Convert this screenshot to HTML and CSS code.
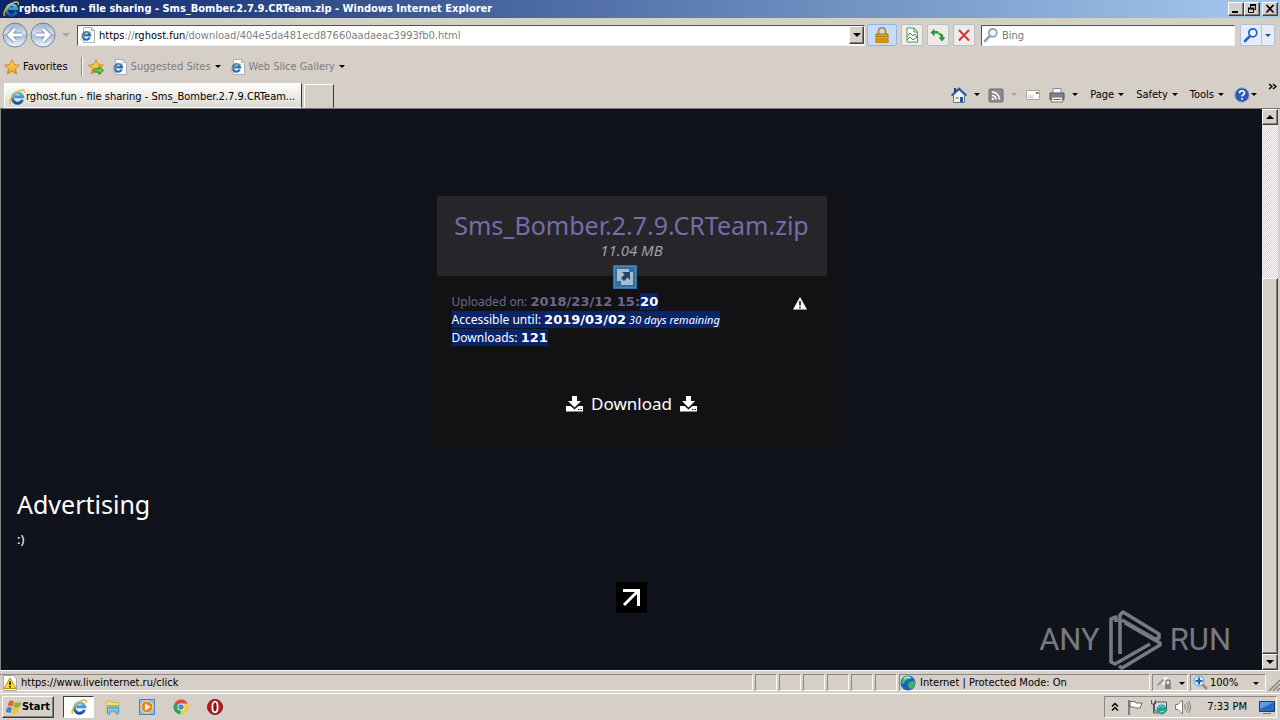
FILE: index.html
```html
<!DOCTYPE html>
<html lang="en">
<head>
<meta charset="utf-8">
<title>rghost.fun - file sharing</title>
<link rel="stylesheet" href="styles.css">
</head>
<body>
<svg class="defs" aria-hidden="true">
  <defs>
    <linearGradient id="blue" x1="0" y1="0" x2="0" y2="1"><stop offset="0" stop-color="#5cc3f5"/><stop offset="1" stop-color="#1450a8"/></linearGradient>
    <linearGradient id="orb" x1="0" y1="0" x2="0" y2="1"><stop offset="0" stop-color="#9db0cc"/><stop offset=".45" stop-color="#d3dfee"/><stop offset=".5" stop-color="#a9bedb"/><stop offset="1" stop-color="#ecf8ff"/></linearGradient>
    <linearGradient id="gold" x1="0" y1="0" x2="0" y2="1"><stop offset="0" stop-color="#ffe27a"/><stop offset="1" stop-color="#f09a10"/></linearGradient>
    <symbol id="ie" viewBox="0 0 16 16">
      <path d="M13.500 10.800A5.200 5.200 0 1 1 13.700 7.800H5.500" fill="none" stroke="url(#blue)" stroke-width="3"/>
      <path d="M2 15C-1 13 3.500 5.500 8.500 2.600 12 .4 16 0 15.200 3.800" fill="none" stroke="#e9b52d" stroke-width="1.400"/>
    </symbol>
    <symbol id="iepage" viewBox="0 0 16 16">
      <path d="M3.500.5h8l3 3v12h-11z" fill="#fff" stroke="#a9aeb8"/>
      <path d="M11.500.5v3h3" fill="none" stroke="#a9aeb8"/>
      <path d="M9.700 10.500A3.700 3.700 0 1 1 10 8.300H4" fill="none" stroke="#1f6fc4" stroke-width="2.200"/>
      <path d="M1.300 13.700C0 11.500 4 6 8 4.800c2-.6 3 0 2.500 1.200" fill="none" stroke="#e0b040"/>
    </symbol>
    <symbol id="star" viewBox="0 0 16 16">
      <path d="M8 .8l2.200 4.800 5.200.6-3.900 3.500 1.100 5.200L8 12.300l-4.600 2.600 1.100-5.200L.6 6.200l5.200-.6z" fill="url(#gold)" stroke="#cf8a1c"/>
    </symbol>
    <symbol id="glass" viewBox="0 0 16 16">
      <path d="M6.500 9.500L2 14" stroke="currentColor" stroke-width="2.600" stroke-linecap="round"/>
      <circle cx="9.800" cy="5.800" r="4" fill="#e9f4ff" stroke="currentColor" stroke-width="1.700"/>
    </symbol>
    <symbol id="dl" viewBox="0 0 17 16">
      <path d="M6 0h5v5h4L8.500 11.500 2 5h4z" fill="#fff"/>
      <path d="M0 10h4.500l4 3.500 4-3.500H17v5.500H0z" fill="#fff"/>
      <path d="M12 13h1.500v1H12zM14.500 13H16v1h-1.500z" fill="#121214"/>
    </symbol>
  </defs>
</svg>

<header class="titlebar">
  <svg class="i16"><use href="#ie"/></svg>
  <h1>rghost.fun - file sharing - Sms_Bomber.2.7.9.CRTeam.zip - Windows Internet Explorer</h1>
  <div class="winbtns">
    <button class="raised" aria-label="Minimize"><svg viewBox="0 0 14 12"><path d="M3 9h6" stroke="#000" stroke-width="2"/></svg></button>
    <button class="raised" aria-label="Restore"><svg viewBox="0 0 14 12"><path d="M5.500 5V1.500h5v5H9" fill="none" stroke="#000"/><path d="M5 2h6M3 5.500h6" stroke="#000" stroke-width="2"/><path d="M3.500 5.500h5v4h-5z" fill="none" stroke="#000"/></svg></button>
    <button class="raised close" aria-label="Close"><svg viewBox="0 0 14 12"><path d="M3.500 2l7 7.500M10.500 2l-7 7.500" stroke="#000" stroke-width="1.700"/></svg></button>
  </div>
</header>

<nav class="navrow">
  <div class="orbs">
    <button aria-label="Back"><svg viewBox="0 0 26 26"><circle cx="13" cy="13" r="12" fill="url(#orb)" stroke="#76839b"/><path d="M20 13H8M13 7l-6 6 6 6" fill="none" stroke="#7f93b5" stroke-width="5"/><path d="M20 13H8M13 7l-6 6 6 6" fill="none" stroke="#fff" stroke-width="3"/></svg></button>
    <button aria-label="Forward"><svg viewBox="0 0 26 26"><circle cx="13" cy="13" r="12" fill="url(#orb)" stroke="#76839b"/><path d="M6 13h12M13 7l6 6-6 6" fill="none" stroke="#7f93b5" stroke-width="5"/><path d="M6 13h12M13 7l6 6-6 6" fill="none" stroke="#fff" stroke-width="3"/></svg></button>
    <svg class="tri pale" viewBox="0 0 8 4"><path d="M0 0h8L4 4z"/></svg>
  </div>
  <div class="address sunken">
    <svg class="i16"><use href="#iepage"/></svg>
    <div class="url" role="textbox" aria-label="Address"><b>https</b>://<b>rghost.fun</b>/download/404e5da481ecd87660aadaeac3993fb0.html</div>
    <button class="raised drop" aria-label="Show addresses"><svg class="tri" viewBox="0 0 8 4"><path d="M0 0h8L4 4z"/></svg></button>
  </div>
  <button class="tool lock" aria-label="Security report"><svg class="i16" viewBox="0 0 16 16"><path d="M4.500 7V4a3.500 3.500 0 0 1 7 0v3" fill="none" stroke="#a88a4a" stroke-width="1.800"/><path d="M2 7h12v9H2z" fill="#e8a81e" stroke="#a9720c"/><path d="M3 9.500h10M3 12h10M3 14h10" stroke="#b87d10"/></svg></button>
  <button class="tool" aria-label="Compatibility view"><svg class="i16" viewBox="0 0 16 16"><path d="M3 1h7l3.500 3.500V15H3z" fill="#fff" stroke="#4b9a50"/><path d="M10 1v4h3M3 10l3-4 3 3 2-2 2 3M3 13l3-3 3 3 4-3" fill="none" stroke="#3d9345"/></svg></button>
  <button class="tool" aria-label="Refresh"><svg class="i16" viewBox="0 0 16 16"><path d="M.5 5.500L4.500 1.500V4h2.500c1.500 0 2 1 2 2.500H4.500v3zM15.500 10.500l-3.500 4-3.500-4h2c0-2-.5-2.500-2-2.500V6c3.500 0 5 1.500 5 4.500z" fill="#2f9637"/></svg></button>
  <button class="tool" aria-label="Stop"><svg class="i16" viewBox="0 0 16 16"><path d="M3 3l10 10.500M13 3L3 13.500" stroke="#d3333a" stroke-width="2"/></svg></button>
  <label class="search sunken"><svg class="i16"><use href="#glass"/></svg><input type="text" placeholder="Bing" aria-label="Search Bing"></label>
  <div class="go">
    <button aria-label="Search"><svg class="i16"><use href="#glass"/></svg></button>
    <button aria-label="Search options"><svg class="tri" viewBox="0 0 8 4"><path d="M0 0h8L4 4z"/></svg></button>
  </div>
</nav>

<div class="favrow">
  <button class="fav"><svg class="i16"><use href="#star"/></svg>Favorites</button>
  <span class="rule"></span>
  <button aria-label="Add to favorites"><svg class="i16" viewBox="0 0 16 16"><use href="#star"/><path d="M6 10h5V7.500l4.500 4-4.500 4V13H6z" fill="#6ed04e" stroke="#258b20"/></svg></button>
  <button class="dim"><svg class="i16"><use href="#iepage"/></svg>Suggested Sites<svg class="tri" viewBox="0 0 8 4"><path d="M0 0h8L4 4z"/></svg></button>
  <button class="dim"><svg class="i16"><use href="#iepage"/></svg>Web Slice Gallery<svg class="tri" viewBox="0 0 8 4"><path d="M0 0h8L4 4z"/></svg></button>
</div>

<div class="tabrow">
  <button class="tab"><svg class="i16"><use href="#ie"/></svg>rghost.fun - file sharing - Sms_Bomber.2.7.9.CRTeam...</button>
  <button class="newtab" aria-label="New tab"></button>
  <div class="commands">
    <button aria-label="Home"><svg class="i16" viewBox="0 0 16 16"><path d="M2.500 8v7.500h11V8L8 3z" fill="#eaf2fb" stroke="#5c7aa5"/><path d="M.5 8.500L8 1.500l7.500 7" fill="none" stroke="#2b579b" stroke-width="1.800"/><path d="M3 1h2v4H3z" fill="#243f78"/><path d="M9 10h3v5H9z" fill="#1d5b9b"/><path d="M4.500 10h3v2h-3z" fill="#d09a36"/></svg><svg class="tri" viewBox="0 0 8 4"><path d="M0 0h8L4 4z"/></svg></button>
    <button aria-label="Feeds"><svg class="i16" viewBox="0 0 16 16"><rect x="1" y="2" width="14" height="13" rx="1" fill="#8c8c8c" stroke="#6d6d6d"/><path d="M4 8.500a4 4 0 0 1 4 4M4 5a7.500 7.500 0 0 1 7.500 7.500" fill="none" stroke="#fff" stroke-width="1.600"/><circle cx="4.900" cy="11.900" r="1.100" fill="#fff"/></svg><svg class="tri pale" viewBox="0 0 8 4"><path d="M0 0h8L4 4z"/></svg></button>
    <button aria-label="Read mail"><svg class="i16" viewBox="0 0 16 16"><path d="M1.500 3.500h13v9h-13z" fill="#fafafa" stroke="#a8a6a6"/><path d="M11 5h2.500v2H11z" fill="#cf5c52"/><path d="M3 9h6M3 10.500h5" stroke="#ccc"/></svg></button>
    <button aria-label="Print"><svg class="i16" viewBox="0 0 16 16"><path d="M4 1.500h8V7H4z" fill="#fff" stroke="#889"/><path d="M1 6h14v6.500H1z" fill="#80848c" stroke="#4c5058"/><path d="M3 10h10l1 5H2z" fill="#f5f5f5" stroke="#777"/><path d="M4 12.500h8" stroke="#56804e"/></svg><svg class="tri" viewBox="0 0 8 4"><path d="M0 0h8L4 4z"/></svg></button>
    <button class="word">Page<svg class="tri" viewBox="0 0 8 4"><path d="M0 0h8L4 4z"/></svg></button>
    <button class="word">Safety<svg class="tri" viewBox="0 0 8 4"><path d="M0 0h8L4 4z"/></svg></button>
    <button class="word">Tools<svg class="tri" viewBox="0 0 8 4"><path d="M0 0h8L4 4z"/></svg></button>
    <button class="help" aria-label="Help"><svg class="i16" viewBox="0 0 16 16"><circle cx="8" cy="8" r="7.200" fill="#2c57b8" stroke="#9aa9c8"/><path d="M5.500 6.200C5.500 3 10.500 3 10.500 6c0 1.800-2.500 1.800-2.500 3.500M8 11v1.800" fill="none" stroke="#fff" stroke-width="1.700"/></svg><svg class="tri" viewBox="0 0 8 4"><path d="M0 0h8L4 4z"/></svg></button>
    <button class="more" aria-label="More commands"><svg viewBox="0 0 9 8"><path d="M1 1l3 2.500L1 6M5 1l3 2.500L5 6" fill="none" stroke="#000" stroke-width="1.400"/></svg></button>
  </div>
</div>

<div class="viewport">
  <main class="page">
    <section class="card">
      <div class="cardhead">
        <h2>Sms_Bomber.2.7.9.CRTeam.zip</h2>
        <p>11.04 MB</p>
        <svg class="badge" viewBox="0 0 24 24"><path d="M0 0h24v24H0z" fill="#3678ad"/><path d="M1.500 1.500h21v21h-21z" fill="none" stroke="#5594c3"/><path d="M4 4h12v3h4v13H8v-4H4z" fill="#b7cfe0"/><path d="M9 7h8v8l-2.500-2.500L11 16l-3-3 3.500-3.500z" fill="#25476e"/></svg>
      </div>
      <div class="details">
        <div>
          <p class="up">Uploaded on: <b>2018/23/12 15:</b><mark><b>20</b></mark></p>
          <p><mark>Accessible until: <b>2019/03/02</b> <i>30 days remaining</i></mark></p>
          <p><mark>Downloads: <b>121</b></mark></p>
        </div>
        <svg class="warn" viewBox="0 0 14 13"><path d="M7 0l7 12.500H0z" fill="#fff"/><path d="M7 4v4.500M7 9.700v1.500" stroke="#121214" stroke-width="1.600"/></svg>
      </div>
      <a class="download" href="#"><svg><use href="#dl"/></svg>Download<svg><use href="#dl"/></svg></a>
    </section>
    <section class="ads">
      <h2>Advertising</h2>
      <p>:)</p>
    </section>
    <a class="counter" href="#" aria-label="Counter"><svg viewBox="0 0 31 31"><path d="M0 0h31v31H0z"/><path d="M7 8.500h15.500V24M22 9L8 23" fill="none" stroke="#fff" stroke-width="3"/></svg></a>
    <div class="watermark"><span>ANY</span>
      <svg viewBox="0 0 54 60"><g fill="none" stroke="#777a80" stroke-width="3.600" stroke-linejoin="round"><path d="M8 12V7L3 9v43l4 2 35-20"/><path d="M12 44V5l3-3 36 22v4l-4 1-33-19"/><path d="M11 56l3 2 38-23v-2l-35-20"/></g></svg>
      <span>RUN</span></div>
  </main>
  <div class="scroll">
    <button class="raised" aria-label="Scroll up"><svg class="tri" viewBox="0 0 8 4"><path d="M0 4h8L4 0z"/></svg></button>
    <div class="track"><div class="thumb raised"></div></div>
    <button class="raised" aria-label="Scroll down"><svg class="tri" viewBox="0 0 8 4"><path d="M0 0h8L4 4z"/></svg></button>
  </div>
</div>

<footer class="status">
  <div class="pane link"><svg class="i16" viewBox="0 0 16 16"><path d="M1.500.5h10l3 3v12h-13z" fill="#fff" stroke="#aaa"/><path d="M8 3l6 10.500H2z" fill="#ffd91f" stroke="#b99408"/><path d="M8 6.500v3.500M8 11v1.500" stroke="#000" stroke-width="1.500"/></svg>https://www.liveinternet.ru/click</div>
  <div class="pane cell"></div><div class="pane cell"></div><div class="pane cell"></div><div class="pane cell"></div><div class="pane cell"></div><div class="pane cell"></div>
  <div class="pane zone"><svg class="i16" viewBox="0 0 16 16"><circle cx="8" cy="8" r="7.500" fill="#1e62b8"/><path d="M3 3c3-3 6-2 7-1L8 5 5 6 4 9 1 8zM9 7l5-1 1 3-3 5-3-1-1-3z" fill="#43b563"/><path d="M4 4c2-2 5-2 7-1" fill="none" stroke="#b9e4f5" stroke-width="1.500"/></svg>Internet | Protected Mode: On</div>
  <button class="pane filter" aria-label="Filtering"><svg class="i16" viewBox="0 0 16 16"><circle cx="8" cy="6" r="5" fill="#f0f0f0" stroke="#c2c2c2"/><path d="M0 10l6-7 1 3-6 5z" fill="#999"/><path d="M9 9V7a2 2 0 0 1 4 0v2" fill="none" stroke="#777" stroke-width="1.300"/><path d="M8 9h6v5H8z" fill="#858589"/></svg><svg class="tri" viewBox="0 0 8 4"><path d="M0 0h8L4 4z"/></svg></button>
  <button class="pane zoom"><svg class="i16" viewBox="0 0 16 16"><path d="M9 9l5 5" stroke="#a98560" stroke-width="2.500"/><circle cx="6" cy="6" r="5" fill="#d8ecff" stroke="#6f9ccc"/><path d="M6 2.500v7M2.500 6h7" stroke="#1b62c4" stroke-width="2"/></svg>100%<svg class="tri" viewBox="0 0 8 4"><path d="M0 0h8L4 4z"/></svg></button>
  <svg class="grip" viewBox="0 0 12 12"><path d="M1 12L12 1M5 12l7-7M9 12l3-3" stroke="#85817b" stroke-width="1.500"/></svg>
</footer>

<div class="taskbar">
  <button class="start raised"><svg class="i16" viewBox="0 0 16 16"><path d="M3 2.500C5 1 6.500 1.500 8 2.500L6.500 7.500C5 6.500 3.500 6.500 1.500 7.500z" fill="#e8602c"/><path d="M9 3c2 1 4 1 6.500-.5L14 7.500c-2.500 1.500-4.500 1.500-6.500.5z" fill="#7fb83c"/><path d="M1 9c2-1.500 3.500-1 5 0l-1.500 5C3 13-.5 13-.5 13.500z" fill="#3f83d2"/><path d="M7 9c2 1 4 1 6.500-.5L12 13.500c-2.500 1.500-4.500 1.500-6.500.5z" fill="#f5c230"/></svg>Start</button>
  <button class="task active" aria-label="Internet Explorer"><svg class="i16"><use href="#ie"/></svg></button>
  <button class="task" aria-label="Explorer"><svg class="i16" viewBox="0 0 16 16"><path d="M1 2h5l1 1.500h7V13H1z" fill="#f2dc8c" stroke="#d3b552"/><path d="M2 6h12v3H2z" fill="#8bc17a"/><path d="M2.500 15V9h11v6H11v-3H5v3z" fill="#8cc8ea" stroke="#5098c8"/></svg></button>
  <button class="task" aria-label="Media Player"><svg class="i16" viewBox="0 0 16 16"><path d="M.5.5h15v15H.5z" fill="#8fc0e8" stroke="#4c83bd"/><circle cx="8" cy="8" r="6" fill="#ef8514" stroke="#fbe1b8"/><path d="M6 4.500L11.500 8 6 11.500z" fill="#fff"/></svg></button>
  <button class="task" aria-label="Chrome"><svg class="i16" viewBox="0 0 16 16"><path d="M8 8L1.500 4.200A7.500 7.500 0 0 1 14.800 4.800H8z" fill="#dd4a3c"/><path d="M8 8l-6.500-3.800A7.500 7.500 0 0 0 7.500 15.500z" fill="#35a350"/><path d="M8 4.800h6.800A7.500 7.500 0 0 1 7.500 15.500L11 8z" fill="#fbcb35"/><circle cx="8" cy="8" r="3.500" fill="#fff"/><circle cx="8" cy="8" r="2.700" fill="#4687ea"/></svg></button>
  <button class="task" aria-label="Opera"><svg class="i16" viewBox="0 0 16 16"><circle cx="8" cy="8" r="7.500" fill="#c2161c" stroke="#81161a"/><ellipse cx="8" cy="8" rx="2.600" ry="5.300" fill="#821014" stroke="#fff" stroke-width="1.800"/></svg></button>
  <div class="tray">
    <svg class="chev" viewBox="0 0 8 10"><path d="M1 4.500l3-3 3 3M1 8.500l3-3 3 3" fill="none" stroke="#000" stroke-width="1.500"/></svg>
    <svg class="i16" viewBox="0 0 16 16"><path d="M2 1v15" stroke="#666" stroke-width="1.500"/><path d="M3 2.500h5l1 1.500h6L13 9H8.500L7.500 8H3z" fill="#fff" stroke="#666"/></svg>
    <svg class="i16" viewBox="0 0 16 16"><path d="M3.500 3h12v9h-12z" fill="#c7e3f0" stroke="#555"/><path d="M.5 1v4h4V1M2.500 5v9h5" fill="none" stroke="#555"/><circle cx="10.500" cy="10.500" r="5" fill="#26a18f"/><path d="M7 9c2-3 4-2 6 0M9 13l4-1" stroke="#9fe3c5" fill="none"/></svg>
    <svg class="i16" viewBox="0 0 16 16"><path d="M.5 5.500H3L7.500 1v14L3 10.500H.5z" fill="#fff" stroke="#777"/><path d="M9.500 5.500q2 2.500 0 5M11.500 3.500q3.500 4.500 0 9M13.500 2q4 6 0 12" fill="none" stroke="#777"/></svg>
    <time>7:33 PM</time>
    <svg class="desk" viewBox="0 0 16 14"><path d="M.5 1.500h15v10H.5z" fill="#2b68c2" stroke="#183d78"/><path d="M1 2h14L1 9z" fill="#5f9ce6"/><path d="M4 13.500h8" stroke="#777"/></svg>
  </div>
</div>
</body>
</html>
```
FILE: styles.css
```css
* { box-sizing: border-box; }
body {
  margin: 0;
  height: 100vh;
  display: flex;
  flex-direction: column;
  overflow: hidden;
  background: #d5cfc8;
  color: #000;
  font: 11px/14px "DejaVu Sans Condensed", "DejaVu Sans", sans-serif;
}
h1, h2, p { margin: 0; font-weight: normal; }
button {
  margin: 0;
  padding: 0;
  border: 0;
  background: none;
  color: inherit;
  font: inherit;
  display: flex;
  align-items: center;
  white-space: nowrap;
}
svg { display: block; flex: none; }
.defs { position: absolute; width: 0; height: 0; }
.i16 { width: 16px; height: 16px; }
.tri { width: 6px; height: 3px; fill: #000; }
.pale { fill: #aaa6a0; }
.raised {
  background: #d5d1c8;
  border: 1px solid;
  border-color: #fff #404040 #404040 #fff;
  box-shadow: inset -1px -1px #808080;
  justify-content: center;
}
.sunken {
  background: #fff;
  border: 1px solid;
  border-color: #55534f #f4f2ee #f4f2ee #55534f;
}

.titlebar {
  height: 18px;
  display: flex;
  align-items: center;
  padding: 0 2px 0 3px;
  background: linear-gradient(90deg, #0a246a, #a6caf0);
  color: #fff;
}
.titlebar h1 { flex: 1; font-size: 11px; font-weight: bold; line-height: 18px; }
.winbtns { display: flex; }
.winbtns button { width: 16px; height: 14px; }
.winbtns svg { width: 14px; height: 12px; }
.winbtns .close { margin-left: 2px; }

.navrow { height: 34px; display: flex; align-items: center; padding: 0 5px 0 2px; }
.orbs { display: flex; align-items: center; gap: 2px; width: 75px; }
.orbs button svg { width: 26px; height: 26px; }
.orbs .tri { width: 8px; height: 4px; margin-left: 4px; }
.address { flex: 1; height: 21px; display: flex; align-items: center; padding-left: 2px; }
.url { flex: 1; margin-left: 3px; padding-top: 2px; color: #808080; }
.url b { font-weight: normal; color: #000; }
.drop { width: 15px; height: 18px; }
.drop .tri, .scroll .tri { width: 8px; height: 4px; }
.tool {
  width: 22px;
  height: 22px;
  margin-left: 4px;
  justify-content: center;
  background: #eeecea;
  border: 1px solid #b9bfcb;
  border-radius: 2px;
}
.lock { width: 30px; margin-left: 2px; background: #c6dcfa; border-color: #92b5e8; }
.search { width: 254px; height: 21px; margin-left: 6px; display: flex; align-items: center; gap: 3px; padding-left: 1px; color: #8aa3b8; }
.search input { flex: 1; min-width: 0; border: 0; padding: 2px 0 0; background: none; font: inherit; outline: 0; }
.search input::placeholder { color: #757575; opacity: 1; }
.go { display: flex; margin-left: 5px; border: 1px solid #b4c0d4; border-radius: 2px; background: #e6edf8; color: #2460d0; }
.go button { width: 20px; height: 20px; justify-content: center; }
.go button + button { width: 13px; border-left: 1px solid #b4c0d4; }
.go .tri { fill: #1c4f9a; }

.favrow { height: 29px; display: flex; align-items: center; padding-left: 4px; }
.favrow button { gap: 3px; }
.rule { height: 19px; margin: 0 5px 0 13px; border-left: 1px solid #8c8883; border-right: 1px solid #fff; }
.favrow .dim { color: #807c78; margin-left: 8px; }
.favrow .dim .tri { margin-left: 1px; }
.favrow .dim + .dim { margin-left: 9px; }

.tabrow { height: 28px; display: flex; padding: 2px 3px 0 4px; border-bottom: 1px solid #77757a; }
.tab {
  width: 298px;
  padding: 2px 4px 0;
  gap: 1px;
  background: linear-gradient(#fff, #dcd9d3);
  border: 1px solid;
  border-color: #fff #35332f transparent #fff;
}
.newtab { width: 30px; margin: 1px 0 0 2px; border: 1px solid; border-color: #fff #35332f transparent #fff; }
.commands { flex: 1; display: flex; justify-content: flex-end; align-items: center; padding-bottom: 2px; }
.commands button { gap: 7px; margin-left: 8px; }
.commands .word, .commands .help { gap: 4px; margin-left: 12px; }
.commands .help { gap: 1px; margin-left: 10px; }
.commands .more { align-self: flex-start; margin-left: 11px; }
.more svg { width: 9px; height: 8px; }

.viewport { flex: 1; min-height: 0; display: flex; border-left: 1px solid #807e7c; border-right: 2px solid #d5cfc8; }
.page {
  flex: 1;
  position: relative;
  padding: 79px 16px 0;
  overflow: hidden;
  background: #10131c;
  color: #fff;
  font: 12px/18px "Noto Sans", sans-serif;
}
.card { width: 406px; height: 260px; margin: 0 auto; padding: 8px 8px 0; background: #121214; display: flex; flex-direction: column; }
.cardhead { position: relative; height: 80px; padding-top: 15px; background: #26252a; text-align: center; }
.cardhead h2 { font-size: 25px; line-height: 28px; color: #786ba8; }
.cardhead p { font-size: 15px; line-height: 22px; font-style: italic; color: #a19ea5; }
.badge { position: absolute; left: 176px; top: 69px; width: 24px; height: 24px; opacity: .9; }
.details { display: flex; justify-content: space-between; padding: 17px 20px 0 15px; }
.details b { font: bold 13px/18px "DejaVu Sans", sans-serif; }
.details i { font-size: 11px; }
.up { color: #6f6590; }
mark { background: #0a246a; color: #fff; }
.warn { width: 14px; height: 13px; margin-top: 4px; }
.download { display: flex; justify-content: center; align-items: center; gap: 8px; margin-top: 45px; color: #fff; text-decoration: none; font-size: 17px; line-height: 24px; }
.download svg { width: 17px; height: 16px; }
.ads { margin-top: 40px; }
.ads h2 { font-size: 25px; line-height: 32px; }
.ads p { margin-top: 10px; font-size: 13px; }
.counter { display: block; width: 31px; margin: 34px auto 0; }
.watermark {
  position: absolute;
  right: 31px;
  bottom: 0;
  display: flex;
  align-items: center;
  gap: 8px;
  color: #777a80;
  font: 31px/60px Roboto, sans-serif;
}
.watermark svg { width: 54px; height: 60px; }

.scroll { width: 16px; display: flex; flex-direction: column; }
.scroll button { height: 16px; }
.track { flex: 1; display: flex; flex-direction: column; justify-content: flex-end; background: repeating-conic-gradient(#fff 0 25%, #d5d1c8 0 50%) 0 0 / 2px 2px; }
.thumb { height: 71%; }

.status { height: 24px; display: flex; padding: 3px 0 2px; border-top: 1px solid #fff; border-bottom: 1px solid #fff; gap: 2px; }
.pane { display: flex; align-items: center; padding-top: 1px; border: 1px solid; border-color: #8c8883 #fff #fff #8c8883; gap: 4px; }
.link { flex: 1; gap: 3px; padding-left: 2px; border-left: 0; }
.cell { width: 22px; }
.zone { width: 251px; }
.filter { width: 36px; gap: 6px; padding-left: 4px; }
.zoom { width: 76px; padding-left: 2px; gap: 1px; }
.zoom .tri { margin-left: 14px; }
.grip { width: 12px; height: 12px; align-self: flex-end; }

.taskbar { height: 26px; display: flex; align-items: center; padding: 0 3px 0 2px; }
.start { width: 52px; height: 22px; gap: 0; font-weight: bold; }
.task { width: 31px; height: 22px; margin-left: 3px; justify-content: center; }
.task.active { margin-left: 9px; background: #fff; border: 1px solid; border-color: #404040 #fff #fff #404040; }
.tray { margin-left: auto; height: 22px; display: flex; align-items: center; gap: 8px; padding: 0 1px 0 6px; border: 1px solid; border-color: #8c8883 #fff #fff #8c8883; }
.tray time { margin-left: 8px; }
.chev { width: 8px; height: 10px; }
.desk { width: 16px; height: 14px; margin-left: 4px; }
```
